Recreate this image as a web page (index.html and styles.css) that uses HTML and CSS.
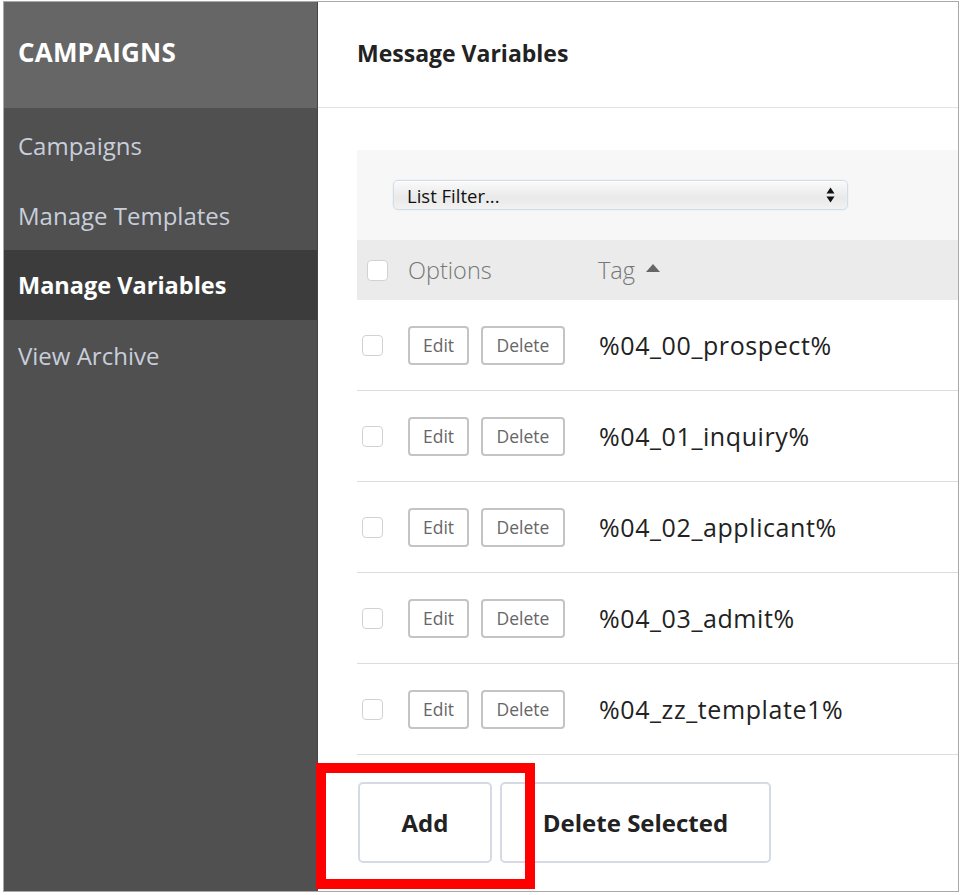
FILE: index.html
```html
<!DOCTYPE html>
<html>
<head>
<meta charset="utf-8">
<link rel="stylesheet" href="styles.css">
</head>
<body>
<div class="frame">
  <aside class="sidebar">
    <div class="side-head">CAMPAIGNS</div>
    <nav class="nav">
      <div class="nav-item">Campaigns</div>
      <div class="nav-item">Manage Templates</div>
      <div class="nav-item active">Manage Variables</div>
      <div class="nav-item">View Archive</div>
    </nav>
  </aside>
  <main class="main">
    <header class="main-head">Message Variables</header>
    <section class="content">
      <div class="filter">
        <div class="select">
          <span>List Filter...</span>
          <svg class="arrows" width="9" height="16" viewBox="0 0 9 16"><path d="M4.5 0.5 L8.5 6.5 L0.5 6.5 Z M4.5 15.5 L8.5 9.5 L0.5 9.5 Z" fill="#111"/></svg>
        </div>
      </div>
      <div class="thead">
        <span class="cb cb-head"></span>
        <span class="th">Options</span>
        <span class="th tag-th">Tag <svg class="sort" width="16" height="10" viewBox="0 0 16 10"><path d="M8 1 L15 9 L1 9 Z" fill="#666"/></svg></span>
      </div>
      <div class="row">
        <span class="cb"></span>
        <span class="opts"><span class="btn">Edit</span><span class="btn">Delete</span></span>
        <span class="tag">%04_00_prospect%</span>
      </div>
      <div class="row">
        <span class="cb"></span>
        <span class="opts"><span class="btn">Edit</span><span class="btn">Delete</span></span>
        <span class="tag">%04_01_inquiry%</span>
      </div>
      <div class="row">
        <span class="cb"></span>
        <span class="opts"><span class="btn">Edit</span><span class="btn">Delete</span></span>
        <span class="tag">%04_02_applicant%</span>
      </div>
      <div class="row">
        <span class="cb"></span>
        <span class="opts"><span class="btn">Edit</span><span class="btn">Delete</span></span>
        <span class="tag">%04_03_admit%</span>
      </div>
      <div class="row">
        <span class="cb"></span>
        <span class="opts"><span class="btn">Edit</span><span class="btn">Delete</span></span>
        <span class="tag">%04_zz_template1%</span>
      </div>
      <div class="actions">
        <span class="big-btn add">Add</span>
        <span class="big-btn del">Delete Selected</span>
        <span class="highlight"></span>
      </div>
    </section>
  </main>
</div>
</body>
</html>
```
FILE: styles.css
```css
* { box-sizing: border-box; }
html, body { margin: 0; padding: 0; background: #fff; }
body { font-family: "Open Sans", "Noto Sans", sans-serif; }

.frame {
  margin: 1px 0 0 3px;
  width: 956px;
  height: 891px;
  border: 1px solid #a9a9a9;
  display: flex;
  overflow: hidden;
}

.sidebar {
  width: 314px;
  background: #505050;
  border-right: 1px solid #454545;
  flex: none;
}
.side-head {
  height: 106px;
  background: #666666;
  color: #fff;
  font-weight: 700;
  font-size: 26px;
  letter-spacing: 0.2px;
  padding: 0 0 6px 14px;
  display: flex;
  align-items: center;
}
.nav { padding-top: 2px; }
.nav-item {
  height: 70px;
  display: flex;
  align-items: center;
  padding-left: 14px;
  font-size: 24px;
  color: #c8ceda;
}
.nav-item.active {
  background: #3c3c3c;
  color: #fff;
  font-weight: 700;
  font-size: 23.5px;
}

.main { flex: 1; background: #fff; }
.main-head {
  height: 106px;
  border-bottom: 1px solid #e1e1e7;
  padding: 0 0 4px 39px;
  display: flex;
  align-items: center;
  font-weight: 700;
  font-size: 23px;
  color: #222;
}
.content { padding: 42px 0 0 39px; }

.filter {
  height: 90px;
  background: #f7f7f7;
  display: flex;
  align-items: center;
  padding-left: 36px;
}
.select {
  width: 455px;
  height: 30px;
  border: 1px solid #d3dde8;
  border-radius: 5px;
  background: linear-gradient(#fafafa, #e9e9e9 60%, #f2f2f2);
  box-shadow: 0 0 0 1px #eef2f7, inset 0 1px 1px #fff;
  display: flex;
  align-items: center;
  justify-content: space-between;
  padding: 0 12px 0 13px;
  font-size: 18.5px;
  color: #111;
}
.arrows { display: block; }

.thead {
  height: 60px;
  background: #ebebeb;
  display: grid;
  grid-template-columns: 51px 190px 1fr;
  align-items: center;
}
.cb {
  width: 21px;
  height: 21px;
  border: 1px solid #d2d2d2;
  border-radius: 4px;
  background: #fff;
  margin-left: 5px;
}
.cb-head { margin-left: 10px; }
.th {
  font-size: 23.5px;
  font-weight: 300;
  color: #777;
}
.tag-th { display: flex; align-items: center; }
.sort { margin-left: 10px; margin-top: -4px; }

.row {
  height: 91px;
  border-bottom: 1px solid #dcdcdc;
  display: grid;
  grid-template-columns: 51px 191px 1fr;
  align-items: center;
}
.opts { display: flex; gap: 12px; }
.btn {
  height: 39px;
  border: 2px solid #c4c4c4;
  border-radius: 4px;
  display: flex;
  align-items: center;
  justify-content: center;
  font-size: 17.5px;
  color: #666;
}
.btn:first-child { width: 61px; }
.btn:last-child { width: 84px; }
.tag { font-size: 25px; letter-spacing: 0.6px; color: #222; }

.actions {
  position: relative;
  display: flex;
  gap: 8px;
  margin-top: 27px;
  padding-left: 1px;
}
.big-btn {
  height: 81px;
  border: 2px solid #d6dae4;
  border-radius: 5px;
  display: flex;
  align-items: center;
  justify-content: center;
  font-size: 24px;
  font-weight: 700;
  color: #222;
  background: #fff;
}
.add { width: 134px; }
.del { width: 271px; }
.highlight {
  position: absolute;
  left: -41px;
  top: -19px;
  width: 219px;
  height: 126px;
  border: 10px solid #ff0000;
}
```
